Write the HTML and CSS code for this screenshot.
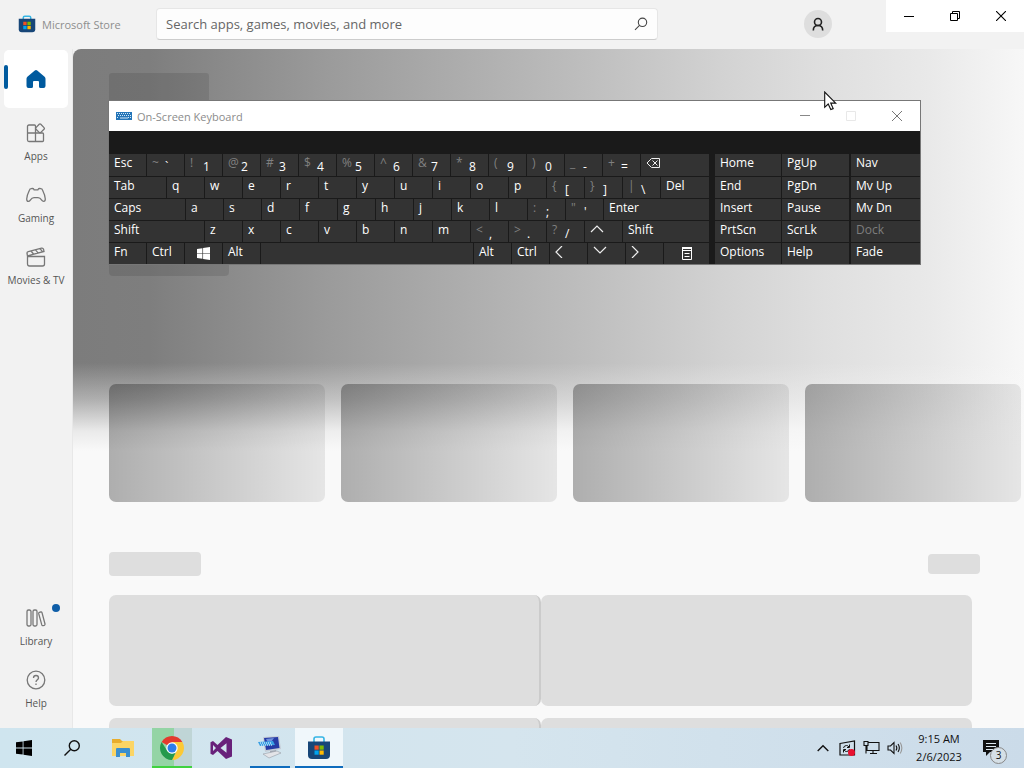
FILE: index.html
```html
<!DOCTYPE html>
<html lang="en">
<head>
<meta charset="utf-8">
<meta name="viewport" content="width=device-width, initial-scale=1">
<title>Microsoft Store</title>
<link rel="stylesheet" href="styles.css">
</head>
<body>
<div class="desktop">
  <div class="store">
    <header class="store-header">
      <div class="brand">
        <svg class="brand-icon" width="18" height="18" viewBox="0 0 24 24"><path d="M7 6V3.500Q7 1.500 9 1.500h6Q17 1.500 17 3.500V6" fill="none" stroke="#35b5e5" stroke-width="2"/><path d="M1 5h22v14q0 4-4 4H5q-4 0-4-4z" fill="#174678"/><path d="M7 9h4.500v4.500H7z" fill="#f25022"/><path d="M12.500 9H17v4.500h-4.500z" fill="#7fba00"/><path d="M7 14.500h4.500V19H7z" fill="#00a4ef"/><path d="M12.500 14.500H17V19h-4.500z" fill="#ffb900"/></svg>
        <span>Microsoft Store</span>
      </div>
      <form class="search">
        <input class="search-input" type="text" aria-label="Search" placeholder="Search apps, games, movies, and more">
        <button class="search-button" type="button" aria-label="Search">
          <svg width="14" height="14" viewBox="0 0 14 14" fill="none" stroke="#444" stroke-width="1.100"><circle cx="8.500" cy="5.300" r="4.200"/><path d="M5.500 8.300L1 12.800"/></svg>
        </button>
      </form>
      <button class="avatar" type="button" aria-label="Account">
        <svg width="14" height="14" viewBox="0 0 14 14" fill="none" stroke="#222" stroke-width="1.600"><circle cx="7" cy="5" r="3.500"/><path d="M2.300 13.500c0-3 1.700-5 4.700-5s4.700 2 4.700 5"/></svg>
      </button>
      <div class="window-controls">
        <button class="window-button" type="button" aria-label="Minimize"><svg width="10" height="10" viewBox="0 0 10 10"><path d="M0 5.500h10" stroke="#000"/></svg></button>
        <button class="window-button" type="button" aria-label="Restore"><svg width="10" height="10" viewBox="0 0 10 10" fill="none" stroke="#000"><path d="M.5 2.500h7v7h-7zM2.500 2.500v-2h7v7h-2"/></svg></button>
        <button class="window-button" type="button" aria-label="Close"><svg width="10" height="10" viewBox="0 0 10 10"><path d="M0 0l10 10M10 0L0 10" stroke="#000" stroke-width="1.100"/></svg></button>
      </div>
    </header>
    <div class="store-body">
      <nav class="sidebar">
        <a class="nav-item nav-home" href="#" aria-label="Home">
          <svg width="20" height="20" viewBox="0 0 20 20"><path d="M8.800 1.400q1.200-1 2.400 0l7.400 6.300q.9.800.9 2v7.300q0 2-2 2h-3q-1.500 0-1.500-1.500V13q0-1-1-1h-4q-1 0-1 1v4.500Q7 19 5.500 19h-3q-2 0-2-2V9.700q0-1.200.9-2z" fill="#005a9e"/></svg>
        </a>
        <a class="nav-item" href="#">
          <svg width="20" height="20" viewBox="0 0 20 20" fill="none" stroke="#777" stroke-width="1.300"><path d="M9.500 10V3q0-1-1-1H3Q1.500 2 1.500 3.500V17q0 1.500 1.500 1.500h13.500q1 0 1-1V11q0-1-1-1zM1.500 10h8M9.500 10v8.500"/><path d="M13.200 1.300q.8-.8 1.600 0l3.200 3.300q.8.800 0 1.600l-3.200 3.200q-.8.800-1.600 0L10 6.200q-.8-.8 0-1.600z"/></svg>
          <span>Apps</span>
        </a>
        <a class="nav-item" href="#">
          <svg width="20" height="20" viewBox="0 0 20 20" fill="none" stroke="#777" stroke-width="1.300"><path d="M3.500 5q.4-1.200 1.600-1.300l1.500-.2q.8 0 1.200.8l.3.600h3.800l.3-.6q.4-.8 1.200-.8l1.500.2q1.200.1 1.600 1.300Q19 10 19.300 14q0 2.400-1.600 2.400-1.200 0-2-1.200-1.600-2.500-3.700-2.500H8q-2.100 0-3.700 2.500-.8 1.200-2 1.200Q.7 16.400.7 14 1 10 3.500 5z"/></svg>
          <span>Gaming</span>
        </a>
        <a class="nav-item" href="#">
          <svg width="20" height="20" viewBox="0 0 20 20" fill="none" stroke="#777" stroke-width="1.300"><path d="M1.500 9.500h17V17q0 2-2 2h-13q-2 0-2-2zM1.500 9L1 6.500Q.8 5 2.300 4.500L15.500 1.200q1.600-.3 2 1l.5 2.300L1.500 8.800M5 4l2.500 3M9.500 2.800L12 5.800M14 1.700l2.500 3"/></svg>
          <span>Movies &amp; TV</span>
        </a>
        <span class="nav-gap"></span>
        <a class="nav-item" href="#">
          <svg width="20" height="20" viewBox="0 0 20 20" fill="none" stroke="#777" stroke-width="1.300"><rect x="1" y="2" width="4" height="16" rx="1.500"/><rect x="7" y="2" width="4" height="16" rx="1.500"/><path d="M12.700 5.700q-.2-1 .7-1.300l1.400-.4q.9-.2 1.200.7l3 11.300q.2 1-.7 1.300l-1.300.3q-.9.200-1.200-.7z"/></svg>
          <span>Library</span>
          <i class="nav-dot"></i>
        </a>
        <a class="nav-item" href="#">
          <svg width="20" height="20" viewBox="0 0 20 20" fill="none" stroke="#777" stroke-width="1.300"><circle cx="10" cy="10" r="8.800"/><path d="M7.500 8q0-2.500 2.500-2.500T12.500 8c0 1.700-2.500 2-2.500 4M10 13.500V15"/></svg>
          <span>Help</span>
        </a>
      </nav>
      <main class="content">
        <section class="hero">
          <div class="hero-title"></div>
          <div class="hero-action"></div>
          <div class="cards">
            <div class="card"></div>
            <div class="card"></div>
            <div class="card"></div>
            <div class="card"></div>
          </div>
        </section>
        <section class="collection">
          <div class="collection-head">
            <div class="collection-title"></div>
            <div class="collection-link"></div>
          </div>
          <div class="panels">
            <div class="panel"></div>
            <div class="panel"></div>
            <div class="panel"></div>
            <div class="panel"></div>
          </div>
        </section>
      </main>
    </div>
  </div>

  <section class="keyboard" aria-label="On-Screen Keyboard">
    <div class="kb-titlebar">
      <svg width="16" height="10" viewBox="0 0 16 10"><path d="M0 1h16v8H0z" fill="#2475b8"/><path d="M1 2.500h14M2 4.500h13M1 6.500h2M12 6.500h3" stroke="#d5e8f7" stroke-dasharray="1 1"/><path d="M4 7h8" stroke="#d5e8f7"/></svg>
      <span class="kb-title">On-Screen Keyboard</span>
      <button class="kb-control" type="button" aria-label="Minimize keyboard"><svg width="10" height="10" viewBox="0 0 10 10"><path d="M0 4.500h10" stroke="#888"/></svg></button>
      <button class="kb-control" type="button" aria-label="Maximize keyboard" disabled><svg width="10" height="10" viewBox="0 0 10 10"><path d="M.5.5h9v9h-9z" fill="none" stroke="#e8e8e8"/></svg></button>
      <button class="kb-control" type="button" aria-label="Close keyboard"><svg width="10" height="10" viewBox="0 0 10 10"><path d="M0 0l10 10M10 0L0 10" stroke="#777"/></svg></button>
    </div>
    <div class="kb-body">
      <div class="kb-main">
        <div class="kb-row">
          <button class="key">Esc</button>
          <button class="key"><span class="alt">~</span><span class="low">`</span></button>
          <button class="key"><span class="alt">!</span><span class="low">1</span></button>
          <button class="key"><span class="alt">@</span><span class="low">2</span></button>
          <button class="key"><span class="alt">#</span><span class="low">3</span></button>
          <button class="key"><span class="alt">$</span><span class="low">4</span></button>
          <button class="key"><span class="alt">%</span><span class="low">5</span></button>
          <button class="key"><span class="alt">^</span><span class="low">6</span></button>
          <button class="key"><span class="alt">&amp;</span><span class="low">7</span></button>
          <button class="key"><span class="alt">*</span><span class="low">8</span></button>
          <button class="key"><span class="alt">(</span><span class="low">9</span></button>
          <button class="key"><span class="alt">)</span><span class="low">0</span></button>
          <button class="key"><span class="alt">_</span><span class="low">-</span></button>
          <button class="key"><span class="alt">+</span><span class="low">=</span></button>
          <button class="key key-fill" aria-label="Backspace"><svg class="key-icon" width="14" height="12" viewBox="0 0 14 12" fill="none" stroke="#eee"><path d="M5.500 1.500h8v9h-8L1 6zM6.500 3.500l5 5M11.500 3.500l-5 5"/></svg></button>
        </div>
        <div class="kb-row">
          <button class="key key-tab">Tab</button>
          <button class="key">q</button><button class="key">w</button><button class="key">e</button><button class="key">r</button><button class="key">t</button><button class="key">y</button><button class="key">u</button><button class="key">i</button><button class="key">o</button><button class="key">p</button>
          <button class="key"><span class="alt">{</span><span class="low">[</span></button>
          <button class="key"><span class="alt">}</span><span class="low">]</span></button>
          <button class="key"><span class="alt">|</span><span class="low">\</span></button>
          <button class="key key-fill">Del</button>
        </div>
        <div class="kb-row">
          <button class="key key-caps">Caps</button>
          <button class="key">a</button><button class="key">s</button><button class="key">d</button><button class="key">f</button><button class="key">g</button><button class="key">h</button><button class="key">j</button><button class="key">k</button><button class="key">l</button>
          <button class="key"><span class="alt">:</span><span class="low">;</span></button>
          <button class="key"><span class="alt">"</span><span class="low">'</span></button>
          <button class="key key-fill">Enter</button>
        </div>
        <div class="kb-row">
          <button class="key key-shift">Shift</button>
          <button class="key">z</button><button class="key">x</button><button class="key">c</button><button class="key">v</button><button class="key">b</button><button class="key">n</button><button class="key">m</button>
          <button class="key"><span class="alt">&lt;</span><span class="low">,</span></button>
          <button class="key"><span class="alt">&gt;</span><span class="low">.</span></button>
          <button class="key"><span class="alt">?</span><span class="low">/</span></button>
          <button class="key" aria-label="Up"><svg class="key-icon" width="14" height="12" viewBox="0 0 14 12" fill="none" stroke="#eee" stroke-width="1.200"><path d="M1 8l6-6 6 6"/></svg></button>
          <button class="key key-fill">Shift</button>
        </div>
        <div class="kb-row">
          <button class="key">Fn</button><button class="key">Ctrl</button>
          <button class="key key-center" aria-label="Windows"><svg width="13" height="13" viewBox="0 0 24 24"><path d="M0 3.500l10-1.400V11.400H0zM11.200 1.900L24 0v11.400H11.200zM0 12.600h10v9.300L0 20.500zM11.200 12.600H24V24l-12.800-1.900z" fill="#fff"/></svg></button>
          <button class="key">Alt</button>
          <button class="key key-fill" aria-label="Space"></button>
          <button class="key">Alt</button><button class="key">Ctrl</button>
          <button class="key" aria-label="Left"><svg class="key-icon" width="8" height="12" viewBox="0 0 8 12" fill="none" stroke="#eee" stroke-width="1.200"><path d="M7 0L1 6l6 6"/></svg></button>
          <button class="key" aria-label="Down"><svg class="key-icon" width="14" height="12" viewBox="0 0 14 12" fill="none" stroke="#eee" stroke-width="1.200"><path d="M1 1l6 6 6-6"/></svg></button>
          <button class="key" aria-label="Right"><svg class="key-icon" width="8" height="12" viewBox="0 0 8 12" fill="none" stroke="#eee" stroke-width="1.200"><path d="M1 0l6 6-6 6"/></svg></button>
          <button class="key key-menu" aria-label="Menu"><svg width="10" height="13" viewBox="0 0 10 13" fill="none" stroke="#fff"><path d="M.5.500h9v12h-9zM.5 3.500h9M2.500 6.500h5M2.500 9.500h5"/><path d="M0 1h10" stroke-width="2"/></svg></button>
        </div>
      </div>
      <div class="kb-side">
        <button class="key">Home</button><button class="key">PgUp</button>
        <button class="key">End</button><button class="key">PgDn</button>
        <button class="key">Insert</button><button class="key">Pause</button>
        <button class="key">PrtScn</button><button class="key">ScrLk</button>
        <button class="key">Options</button><button class="key">Help</button>
      </div>
      <div class="kb-side kb-move">
        <button class="key">Nav</button>
        <button class="key">Mv Up</button>
        <button class="key">Mv Dn</button>
        <button class="key" disabled>Dock</button>
        <button class="key">Fade</button>
      </div>
    </div>
  </section>

  <svg class="cursor" width="13" height="20" viewBox="0 0 13 20"><path d="M.7 1v15.300l3.500-3.300 2.600 5.600 2.400-1-2.500-5.500h5z" fill="#fff" stroke="#111" stroke-width="1.100"/></svg>

  <footer class="taskbar">
    <button class="task task-wide" aria-label="Start"><svg width="16" height="16" viewBox="0 0 24 24"><path d="M0 3.500l10-1.400V11.400H0zM11.200 1.900L24 0v11.400H11.200zM0 12.600h10v9.300L0 20.500zM11.200 12.600H24V24l-12.800-1.900z" fill="#000"/></svg></button>
    <button class="task task-wide" aria-label="Search"><svg width="16" height="16" viewBox="0 0 16 16" fill="none" stroke="#111" stroke-width="1.400"><circle cx="10.300" cy="5.700" r="5"/><path d="M6.800 9.200L.5 15.500"/></svg></button>
    <button class="task" aria-label="File Explorer"><svg width="24" height="20" viewBox="0 0 24 20"><path d="M1 1h8l2 2h11v15H1z" fill="#e8ad2d"/><path d="M1 5h9l2-2h11v15H1z" fill="#fbd565"/><path d="M5 19v-8q0-1 1-1h12q1 0 1 1v8h-4v-4H9v4z" fill="#3b8fce"/></svg></button>
    <button class="task task-chrome" aria-label="Chrome"><svg width="24" height="24" viewBox="0 0 24 24"><path d="M12 12L1.610 6A12 12 0 0 1 22.390 6z" fill="#e33b2e"/><path d="M12 6h10.390A12 12 0 0 1 12 24l4.800-9.200z" fill="#fcc934"/><path d="M1.610 6L7.200 14.800Q9 17.500 12 17.500l3.500-.5L12 24A12 12 0 0 1 1.610 6z" fill="#249a4c"/><circle cx="12" cy="12" r="5.700" fill="#fff"/><circle cx="12" cy="12" r="4.500" fill="#2e7de9"/></svg></button>
    <button class="task" aria-label="Visual Studio"><svg width="22" height="22" viewBox="0 0 22 22"><path fill="#68217a" fill-rule="evenodd" d="M16 0l6 2.500v17L16 22l-8.500-8L3 18l-2.500-1.200V5.200L3 4l4.500 4zM16.500 6.300L10.500 11l6 4.700zM3 8v6l3-3z"/></svg></button>
    <button class="task task-running" aria-label="On-Screen Keyboard"><svg width="24" height="24" viewBox="0 0 24 24"><path d="M5 2l16-1 2 13-16 3z" fill="#c5ccd6"/><path d="M6 3l14-1 1.500 11L8 15z" fill="#263ba5"/><path d="M8 4l8-1-5 7z" fill="#6f91dd"/><path d="M0 7l15-1 2 4-15 1z" fill="#3aa0e4"/><path d="M2 8h12M3 10h12" stroke="#fff" stroke-dasharray="1 1"/><path d="M12 16l6-1 1 4H12z" fill="#a2a8b3"/><path d="M5 19l14-3 4 2-12 5z" fill="#e3e4e8" stroke="#969ca6" stroke-width=".6"/></svg></button>
    <button class="task task-store" aria-label="Microsoft Store"><svg width="24" height="24" viewBox="0 0 24 24"><path d="M7 6V3q0-2 2-2h6q2 0 2 2v3" fill="none" stroke="#35b5e5" stroke-width="1.600"/><path d="M1 5.500h22V19q0 4-4 4H5q-4 0-4-4z" fill="#174678"/><path d="M7.500 9.500h4.200v4.200H7.500z" fill="#f25022"/><path d="M12.500 9.500h4.200v4.200h-4.200z" fill="#7fba00"/><path d="M7.500 14.500h4.200v4.200H7.500z" fill="#00a4ef"/><path d="M12.500 14.500h4.200v4.200h-4.200z" fill="#ffb900"/></svg></button>
    <div class="tray">
      <button class="tray-button" aria-label="Show hidden icons"><svg width="12" height="8" viewBox="0 0 12 8"><path d="M.7 7L6 1.700 11.300 7" fill="none" stroke="#111" stroke-width="1.400"/></svg></button>
      <button class="tray-button" aria-label="Update status"><svg width="17" height="17" viewBox="0 0 17 17"><path d="M1 3.500L15.500 1v14H1z" fill="none" stroke="#111" stroke-width="1.200"/><path d="M4.500 8q.5-2.500 3-2.500 1.500 0 2.500 1.500M10.500 4.500v3H8M10.500 9q-.5 2.500-3 2.500-1.500 0-2.500-1.500M4.500 12.500v-3H7" fill="none" stroke="#111" stroke-width="1"/><circle cx="12.500" cy="12.500" r="3.500" fill="#e81130"/></svg></button>
      <button class="tray-button" aria-label="Network"><svg width="17" height="16" viewBox="0 0 17 16" fill="none" stroke="#111" stroke-width="1.100"><path d="M5 2.500h11v8H4v-5M1 1.500h4v4H1zM3 5.500v8M10 10.500v3M7 13.500h7"/></svg></button>
      <button class="tray-button" aria-label="Volume"><svg width="16" height="14" viewBox="0 0 16 14" fill="none" stroke="#111" stroke-width="1.100"><path d="M1 5h2.500L7 1.500v11L3.500 9H1zM9 4.500q1.700 2.500 0 5M11 3q2.700 4 0 8"/><path d="M13.200 1.500q3.300 5.500 0 11" stroke="#999"/></svg></button>
      <button class="clock"><span>9:15 AM</span><span>2/6/2023</span></button>
      <button class="notice" aria-label="Notifications"><svg width="16" height="16" viewBox="0 0 16 16"><path d="M0 0h16v12H7l-4 4v-4H0z" fill="#111"/><path d="M3 3.500h10M3 6.500h10M3 9.500h7" stroke="#dce7ee"/></svg><span class="notice-count">3</span></button>
    </div>
  </footer>
</div>
</body>
</html>
```
FILE: styles.css
```css
* { box-sizing: border-box; }

body {
  margin: 0;
  font-family: "Open Sans", "Noto Sans", sans-serif;
  font-size: 12px;
  color: #555;
}

button {
  border: 0;
  padding: 0;
  margin: 0;
  background: none;
  font: inherit;
  color: inherit;
}

a { color: inherit; text-decoration: none; }
svg { display: block; flex: none; }

.desktop {
  position: relative;
  display: flex;
  flex-direction: column;
  height: 100vh;
  overflow: hidden;
}

/* Store window */
.store {
  flex: 1;
  min-height: 0;
  display: flex;
  flex-direction: column;
  background: #f2f2f2;
}

.store-header {
  display: flex;
  align-items: center;
  height: 49px;
  padding-bottom: 1px;
  flex: none;
}

.brand {
  display: flex;
  align-items: center;
  gap: 6px;
  width: 156px;
  padding-left: 18px;
  font-size: 11px;
  color: #8e8e8e;
}

.search {
  display: flex;
  align-items: center;
  flex: 0 1 502px;
  height: 32px;
  background: #fdfdfd;
  border: 1px solid #e6e6e6;
  border-bottom-color: #ccc;
  border-radius: 4px;
}

.search-input {
  flex: 1;
  min-width: 0;
  border: 0;
  padding: 0 0 0 9px;
  background: none;
  font: inherit;
  font-size: 13px;
  color: #555;
}

.search-input::placeholder { color: #666; opacity: 1; }
.search-button { padding: 0 9px; }

.avatar {
  display: flex;
  align-items: center;
  justify-content: center;
  width: 28px;
  height: 28px;
  margin-left: auto;
  margin-right: 54px;
  border-radius: 50%;
  background: #dedede;
}

.window-controls {
  display: flex;
  align-self: flex-start;
  background: #fff;
}

.window-button {
  display: flex;
  align-items: center;
  justify-content: center;
  width: 46px;
  height: 32px;
}

.store-body { flex: 1; min-height: 0; display: flex; }

.sidebar {
  display: flex;
  flex-direction: column;
  gap: 4px;
  width: 73px;
  flex: none;
  padding: 1px 4px 9px;
  border-right: 1px solid #e8e8e8;
}

.nav-item {
  position: relative;
  display: flex;
  flex-direction: column;
  align-items: center;
  justify-content: center;
  gap: 6px;
  height: 58px;
  flex: none;
  font-size: 10px;
  line-height: 14px;
  white-space: nowrap;
}

.nav-home {
  margin-bottom: 2px;
  background: #fff;
  border-radius: 5px;
}

.nav-home::before {
  content: "";
  position: absolute;
  left: 0;
  top: 15px;
  width: 4px;
  height: 24px;
  border-radius: 2px;
  background: #005a9e;
}

.nav-gap { flex: 1; }

.nav-dot {
  position: absolute;
  top: 5px;
  right: 8px;
  width: 8px;
  height: 8px;
  border-radius: 50%;
  background: #0f5ea8;
}

.content {
  flex: 1;
  min-width: 0;
  overflow: hidden;
  background: #f9f9f9;
  border-top-left-radius: 8px;
}

.hero {
  padding: 24px 0 0 36px;
  background:
    linear-gradient(to bottom, rgba(249, 249, 249, 0) 314px, rgba(249, 249, 249, .4) 350px, rgba(249, 249, 249, .88) 382px, #f9f9f9 402px),
    linear-gradient(to right, #7c7c7c 0%, #7e7e7e 8%, #9b9b9b 27%, #bebebe 54%, #d2d2d2 68%, #dfdfdf 79%, #e9e9e9 90%, #f7f7f7 100%);
}

.hero-title {
  width: 100px;
  height: 48px;
  border-radius: 3px;
  background: rgba(0, 0, 0, .1);
}

.hero-action {
  width: 120px;
  height: 32px;
  margin-top: 123px;
  border-radius: 4px;
  background: rgba(0, 0, 0, .1);
}

.cards {
  display: grid;
  grid-auto-flow: column;
  grid-auto-columns: 216px;
  gap: 16px;
  margin-top: 108px;
}

.card {
  height: 118px;
  border-radius: 7px;
  background: linear-gradient(to right, rgba(0, 0, 0, .3), rgba(0, 0, 0, .08));
}

.collection { padding: 50px 44px 0 36px; }

.collection-head {
  display: flex;
  align-items: center;
  justify-content: space-between;
}

.collection-title {
  width: 92px;
  height: 24px;
  border-radius: 4px;
  background: #dedede;
}

.collection-link {
  width: 52px;
  height: 20px;
  border-radius: 4px;
  background: #dedede;
}

.panels {
  display: grid;
  grid-template-columns: 1fr 1fr;
  row-gap: 12px;
  margin: 19px 8px 0 0;
}

.panel {
  height: 111px;
  border-radius: 7px;
  background: #dedede;
}

.panel:nth-child(odd) { border-right: 2px solid #cbcbcb; }

/* On-screen keyboard window */
.keyboard {
  position: absolute;
  left: 108px;
  top: 100px;
  width: 813px;
  border: 1px solid #777;
  background: #1a1a1a;
  color: #fff;
}

.kb-titlebar {
  display: flex;
  align-items: center;
  height: 30px;
  padding-left: 7px;
  background: #fff;
}

.kb-title {
  flex: 1;
  padding-left: 5px;
  font-size: 11px;
  color: #8c8c8c;
}

.kb-control {
  display: flex;
  align-items: center;
  justify-content: center;
  width: 46px;
  height: 28px;
}

.kb-body {
  display: flex;
  padding-top: 23px;
}

.kb-main {
  flex: 1;
  display: grid;
  grid-template-rows: 22px repeat(4, 21px);
  gap: 1px;
}

.kb-row { display: flex; gap: 1px; }

.key {
  display: flex;
  align-items: flex-start;
  flex: none;
  width: 37px;
  padding-left: 5px;
  background: #333;
  line-height: 18px;
  text-align: left;
}

.key:disabled { color: #7d7d7d; }
.key-fill { flex: 1; }
.key-tab { width: 57px; }
.key-caps { width: 76px; }
.key-shift { width: 95px; }
.key-center { justify-content: center; align-items: center; padding: 0; }
.key-menu { width: 45px; justify-content: center; align-items: center; padding: 0; }
.key-icon { margin-top: 3px; }
.alt { min-width: 13px; color: #808080; }
.low { padding-top: 4px; }

.kb-side {
  display: grid;
  grid-template-columns: 66px 67px;
  grid-template-rows: 22px repeat(4, 21px);
  gap: 1px;
  margin-left: 6px;
}

.kb-side .key { width: auto; }

.kb-move {
  grid-template-columns: 69px;
  margin-left: 2px;
}

.cursor { position: absolute; left: 824px; top: 91px; }

/* Taskbar */
.taskbar {
  display: flex;
  align-items: stretch;
  gap: 9px;
  height: 40px;
  flex: none;
  background: linear-gradient(to right, #cfe5ef, #d5e5ee 50%, #cbdbe9);
}

.task {
  display: flex;
  align-items: center;
  justify-content: center;
  width: 40px;
}

.task-wide { width: 48px; margin-right: -9px; }
.task-wide + .task:not(.task-wide) { margin-left: 7px; }

.task-chrome {
  background: linear-gradient(to right, #94d4a5 55%, #bfd5d6 55%);
  border-bottom: 2px solid #3fd23f;
  padding-top: 2px;
}

.task-running { border-bottom: 2px solid #0f6cbd; }

.task-store {
  width: 48px;
  margin-left: -4px;
  padding-top: 2px;
  background: #f0f7fb;
  border-bottom: 2px solid #0f6cbd;
}

.tray { display: flex; align-items: center; margin-left: auto; color: #111; }

.tray-button {
  display: flex;
  align-items: center;
  justify-content: center;
  width: 24px;
  height: 40px;
}

.clock {
  display: flex;
  flex-direction: column;
  align-items: center;
  width: 64px;
  font-size: 11px;
  line-height: 18px;
}

.notice { position: relative; width: 53px; height: 40px; padding-left: 12px; }

.notice-count {
  position: absolute;
  left: 19px;
  top: 19px;
  width: 17px;
  height: 17px;
  border: 1px solid #888;
  border-radius: 50%;
  background: #d5dfe6;
  font-size: 10px;
  line-height: 15px;
}
```
